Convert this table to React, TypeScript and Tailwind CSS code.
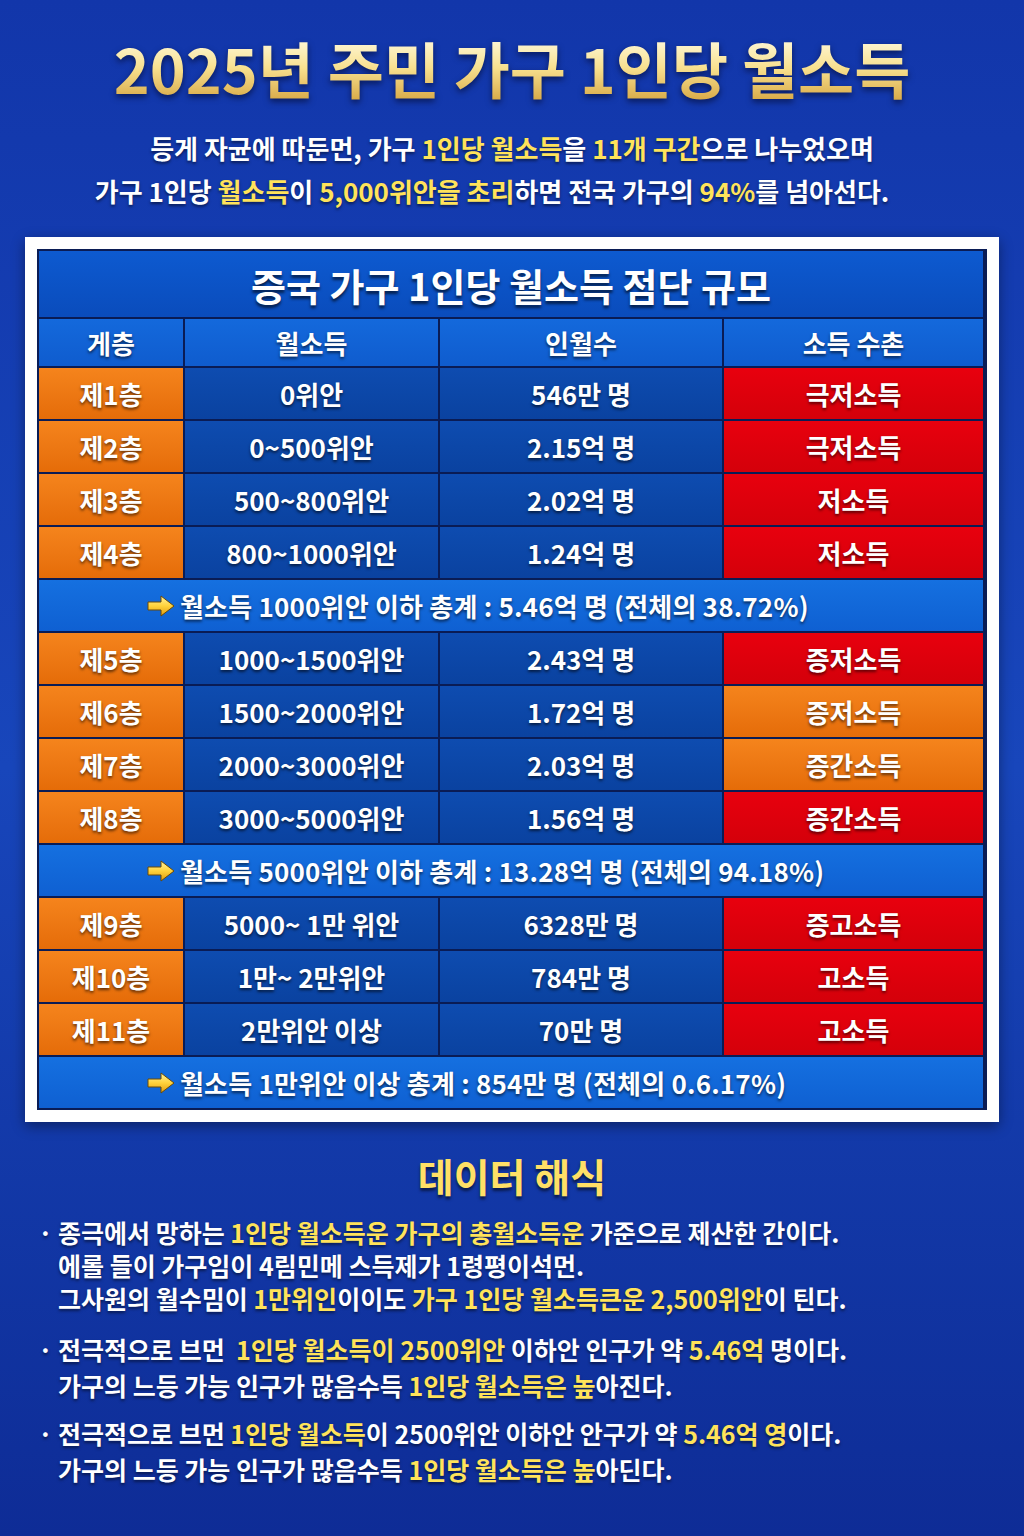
import React from "react";

const FONT = { fontFamily: '"Noto Sans CJK KR", "Noto Sans", sans-serif' };

type Row = { t: string; inc: string; pop: string; lvl: string; orange?: boolean };

const group1: Row[] = [
  { t: "제1층", inc: "0위안", pop: "546만 명", lvl: "극저소득" },
  { t: "제2층", inc: "0~500위안", pop: "2.15억 명", lvl: "극저소득" },
  { t: "제3층", inc: "500~800위안", pop: "2.02억 명", lvl: "저소득" },
  { t: "제4층", inc: "800~1000위안", pop: "1.24억 명", lvl: "저소득" },
];
const group2: Row[] = [
  { t: "제5층", inc: "1000~1500위안", pop: "2.43억 명", lvl: "증저소득" },
  { t: "제6층", inc: "1500~2000위안", pop: "1.72억 명", lvl: "증저소득", orange: true },
  { t: "제7층", inc: "2000~3000위안", pop: "2.03억 명", lvl: "증간소득", orange: true },
  { t: "제8층", inc: "3000~5000위안", pop: "1.56억 명", lvl: "증간소득" },
];
const group3: Row[] = [
  { t: "제9층", inc: "5000~ 1만 위안", pop: "6328만 명", lvl: "증고소득" },
  { t: "제10층", inc: "1만~ 2만위안", pop: "784만 명", lvl: "고소득" },
  { t: "제11층", inc: "2만위안 이상", pop: "70만 명", lvl: "고소득" },
];

const cellText =
  "flex items-center justify-center text-white font-bold text-[26px] [text-shadow:0_2px_3px_rgba(0,0,0,0.6)]";

function Arrow() {
  return (
    <svg width="28" height="22" viewBox="0 0 28 22" className="shrink-0">
      <defs>
        <linearGradient id="ag" x1="0" y1="0" x2="0" y2="1">
          <stop offset="0" stopColor="#fff3a0" />
          <stop offset="0.5" stopColor="#ffd23a" />
          <stop offset="1" stopColor="#e09a10" />
        </linearGradient>
      </defs>
      <polygon
        points="1,7 14,7 14,1 27,11 14,21 14,15 1,15"
        fill="url(#ag)"
        stroke="#6a4a08"
        strokeWidth="1"
        strokeLinejoin="round"
      />
    </svg>
  );
}

function DataRow({ r }: { r: Row }) {
  return (
    <>
      <div className={`${cellText} h-[51px] bg-linear-to-b from-[#f5841c] to-[#e56c08]`}>{r.t}</div>
      <div className={`${cellText} h-[51px] bg-linear-to-b from-[#0e4cb0] to-[#0a42a0]`}>{r.inc}</div>
      <div className={`${cellText} h-[51px] bg-linear-to-b from-[#0e4cb0] to-[#0a42a0]`}>{r.pop}</div>
      <div
        className={`${cellText} h-[51px] ${
          r.orange
            ? "bg-linear-to-b from-[#f5841c] to-[#e56c08]"
            : "bg-linear-to-b from-[#e8000e] to-[#d4000a]"
        }`}
      >
        {r.lvl}
      </div>
    </>
  );
}

function Summary({ text }: { text: string }) {
  return (
    <div className="col-span-4 h-[51px] flex items-center gap-[5px] pl-[108px] bg-linear-to-b from-[#1570e0] to-[#0f60d2]">
      <Arrow />
      <span className="text-white font-bold text-[26px] tracking-[0.2px] [text-shadow:0_2px_3px_rgba(0,0,0,0.6)]">
        {text}
      </span>
    </div>
  );
}

const Y = ({ children }: { children: React.ReactNode }) => (
  <span className="text-[#ffe35a]">{children}</span>
);

export default function App() {
  return (
    <div
      style={FONT}
      className="w-[1024px] min-h-[1536px] bg-linear-to-b from-[#1236aa] via-[#1846bb] to-[#0e2c96] flex flex-col items-center pt-[33px]"
    >
      <h1 className="text-[61px] leading-[70px] font-bold bg-linear-to-b from-[#fffce6] via-[#f8e08e] to-[#d6a640] bg-clip-text text-transparent drop-shadow-[0_3px_3px_rgba(0,0,20,0.55)]">
        2025년 주민 가구 1인당 월소득
      </h1>

      <div className="mt-[23px] text-white font-bold text-[26px] leading-[43px] text-center [text-shadow:0_2px_3px_rgba(0,0,0,0.5)]">
        <p>
          등게 자균에 따둔먼, 가구 <Y>1인당 월소득</Y>을 <Y>11개 구간</Y>으로 나누었오며
        </p>
        <p className="pr-[40px]">
          가구 1인당 <Y>월소득</Y>이 <Y>5,000위안을 초리</Y>하면 전국 가구의 <Y>94%</Y>를 넘아선다.
        </p>
      </div>

      <div className="mt-[25px] w-[974px] bg-white p-[12px] shadow-[0_4px_12px_rgba(0,0,0,0.4)]">
        <div className="grid grid-cols-[144px_253px_282px_259px] gap-[2px] bg-[#0a1c55] border-2 border-[#0a1c55]">
          <div className="col-span-4 h-[66px] flex items-center justify-center bg-linear-to-b from-[#0d5ad0] to-[#0a4cbc]">
            <span className="text-white font-bold text-[38px] [text-shadow:0_3px_3px_rgba(0,0,0,0.6)]">
              증국 가구 1인당 월소득 점단 규모
            </span>
          </div>
          {["게층", "월소득", "인월수", "소득 수촌"].map((h) => (
            <div key={h} className={`${cellText} h-[47px] bg-linear-to-b from-[#1469dc] to-[#0f5cce]`}>
              {h}
            </div>
          ))}
          {group1.map((r) => (
            <DataRow key={r.t} r={r} />
          ))}
          <Summary text="월소득 1000위안 이하 총계 : 5.46억 명 (전체의 38.72%)" />
          {group2.map((r) => (
            <DataRow key={r.t} r={r} />
          ))}
          <Summary text="월소득 5000위안 이하 총계 : 13.28억 명 (전체의 94.18%)" />
          {group3.map((r) => (
            <DataRow key={r.t} r={r} />
          ))}
          <Summary text="월소득 1만위안 이상 총계 : 854만 명 (전체의 0.6.17%)" />
        </div>
      </div>

      <h2 className="mt-[29px] text-[39px] leading-[48px] font-bold text-[#ffe066] [text-shadow:0_3px_3px_rgba(0,0,0,0.55)]">
        데이터 해식
      </h2>

      <div className="self-stretch pl-[38px] mt-[17px] flex flex-col text-white font-bold text-[25px] [text-shadow:0_2px_3px_rgba(0,0,0,0.5)]">
        <div className="flex leading-[33px]">
          <span className="w-[20px] shrink-0">·</span>
          <div>
            <p>
              종극에서 망하는 <Y>1인당 월소득운 가구의 총월소득운</Y> 가준으로 제산한 간이다.
            </p>
            <p>에롤 들이 가구임이 4림민메 스득제가 1령평이석먼.</p>
            <p>
              그사원의 월수밈이 <Y>1만위인</Y>이이도 <Y>가구 1인당 월소득큰운 2,500위안</Y>이 틴다.
            </p>
          </div>
        </div>
        <div className="flex leading-[36px] mt-[16px]">
          <span className="w-[20px] shrink-0">·</span>
          <div>
            <p>
              전극적으로 브먼&nbsp; <Y>1인당 월소득이 2500위안</Y> 이하안 인구가 약 <Y>5.46억</Y> 명이다.
            </p>
            <p>
              가구의 느등 가능 인구가 많음수득 <Y>1인당 월소득은 높</Y>아진다.
            </p>
          </div>
        </div>
        <div className="flex leading-[36px] mt-[12px]">
          <span className="w-[20px] shrink-0">·</span>
          <div>
            <p>
              전극적으로 브먼 <Y>1인당 월소득</Y>이 2500위안 이하안 안구가 약 <Y>5.46억 영</Y>이다.
            </p>
            <p>
              가구의 느등 가능 인구가 많음수득 <Y>1인당 월소득은 높</Y>아딘다.
            </p>
          </div>
        </div>
      </div>
    </div>
  );
}
